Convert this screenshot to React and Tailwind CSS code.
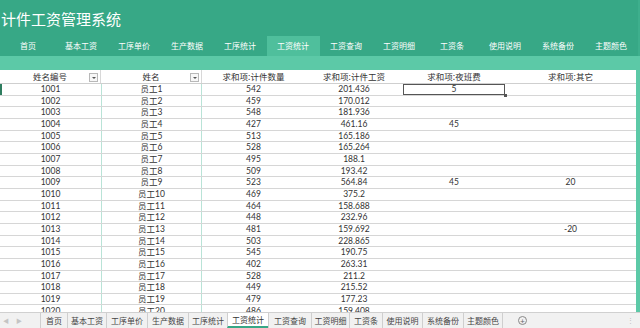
import React from "react";

const navTabs = ["首页", "基本工资", "工序单价", "生产数据", "工序统计", "工资统计", "工资查询", "工资明细", "工资条", "使用说明", "系统备份", "主题颜色"];

const sheetTabs = [
  ["首页", "w-[27px]"],
  ["基本工资", "w-[39px]"],
  ["工序单价", "w-[41px]"],
  ["生产数据", "w-[41px]"],
  ["工序统计", "w-[39px]"],
  ["工资统计", "w-[41px]"],
  ["工资查询", "w-[43px]"],
  ["工资明细", "w-[38px]"],
  ["工资条", "w-[33px]"],
  ["使用说明", "w-[40px]"],
  ["系统备份", "w-[41px]"],
  ["主题颜色", "w-[39px]"],
];

const rows = [
  ["1001", "员工1", "542", "201.436", "5", ""],
  ["1002", "员工2", "459", "170.012", "", ""],
  ["1003", "员工3", "548", "181.936", "", ""],
  ["1004", "员工4", "427", "461.16", "45", ""],
  ["1005", "员工5", "513", "165.186", "", ""],
  ["1006", "员工6", "528", "165.264", "", ""],
  ["1007", "员工7", "495", "188.1", "", ""],
  ["1008", "员工8", "509", "193.42", "", ""],
  ["1009", "员工9", "523", "564.84", "45", "20"],
  ["1010", "员工10", "469", "375.2", "", ""],
  ["1011", "员工11", "464", "158.688", "", ""],
  ["1012", "员工12", "448", "232.96", "", ""],
  ["1013", "员工13", "481", "159.692", "", "-20"],
  ["1014", "员工14", "503", "228.865", "", ""],
  ["1015", "员工15", "545", "190.75", "", ""],
  ["1016", "员工16", "402", "263.31", "", ""],
  ["1017", "员工17", "528", "211.2", "", ""],
  ["1018", "员工18", "449", "215.52", "", ""],
  ["1019", "员工19", "479", "177.23", "", ""],
  ["1020", "员工20", "486", "159.408", "", ""],
];

const cols = "grid grid-cols-[101px_101px_103px_98px_102px_1fr]";
const cjk = { fontFamily: '"Noto Sans CJK SC",sans-serif' };

function FilterBtn() {
  return (
    <span className="absolute right-[2px] top-[3px] w-[9px] h-[9px] border border-[#b8b8b8] bg-[#f7f7f7] flex items-center justify-center">
      <span className="block w-0 h-0 border-l-[2px] border-r-[2px] border-t-[2px] border-l-transparent border-r-transparent border-t-[#555]" />
    </span>
  );
}

export default function App() {
  return (
    <div className="w-[640px] h-[328px] overflow-hidden flex flex-col bg-white" style={{ fontFamily: '"Lato","Noto Sans CJK SC",sans-serif' }}>
      {/* top banner */}
      <div className="flex bg-[#37a886]">
        <div className="flex-1 flex flex-col">
          <div className="h-[36px] flex items-center pl-[1px] text-white text-[15px] leading-none" style={cjk}>
            计件工资管理系统
          </div>
          <div className="h-[20px] flex pl-[1.5px]">
            {navTabs.map((t) => (
              <div
                key={t}
                className={`w-[53px] flex items-center justify-center text-[8px] text-white ${t === "工资统计" ? "bg-[#4fbf9c]" : ""}`}
                style={cjk}
              >
                {t}
              </div>
            ))}
          </div>
        </div>
        <div className="w-[4px] bg-[#3eaf8d]" />
      </div>

      <div className="flex-1 flex min-h-0">
        <div className="flex-1 flex flex-col min-h-0">
          <div className="h-[14px] bg-[#5cc9a7] shrink-0" />
          <div className="flex-1 overflow-hidden text-[#333] text-[8.5px] leading-none">
            {/* header */}
            <div className={`${cols} h-[14px] border-b border-[#cfcfcf]`} style={cjk}>
              <div className="relative flex items-center justify-center border-r border-[#d8d8d8]">
                姓名编号
                <FilterBtn />
              </div>
              <div className="relative flex items-center justify-center border-r border-[#d8d8d8]">
                姓名
                <FilterBtn />
              </div>
              <div className="flex items-center justify-center">求和项:计件数量</div>
              <div className="flex items-center justify-center">求和项:计件工资</div>
              <div className="flex items-center justify-center">求和项:夜班费</div>
              <div className="flex items-center justify-center">求和项:其它</div>
            </div>
            {rows.map((r, i) => (
              <div key={r[0]} className={`${cols} h-[11.67px] border-b border-[#d6d6d6] relative`}>
                {i === 0 && <span className="absolute left-0 top-0 bottom-0 w-[2px] bg-[#2e7d5f]" />}
                <div className="flex items-center justify-center">{r[0]}</div>
                <div className="flex items-center justify-center border-x border-[#b9e3d7]">{r[1]}</div>
                <div className="flex items-center justify-center">{r[2]}</div>
                <div className="flex items-center justify-center">{r[3]}</div>
                <div className={`flex items-center justify-center relative ${i === 0 ? "outline-[1.5px] outline outline-[#555] -outline-offset-1" : ""}`}>
                  {r[4]}
                  {i === 0 && <span className="absolute right-[-2px] bottom-[-2px] w-[3px] h-[3px] bg-[#555]" />}
                </div>
                <div className="flex items-center justify-center">{r[5]}</div>
              </div>
            ))}
          </div>
        </div>
        <div className="w-[4px] bg-[#5cc9a7]" />
      </div>

      {/* sheet tabs */}
      <div className="h-[16px] shrink-0 flex items-stretch bg-[#f1f1f1] border-t border-[#d0d0d0] text-[8px] text-[#444]" style={cjk}>
        <div className="w-[40px] flex items-center gap-[7px] pl-[3px] text-[#c4c4c4] text-[6px]">
          <span>◀</span>
          <span>▶</span>
        </div>
        {sheetTabs.map(([t, w]) => (
          <div
            key={t}
            className={`${w} flex items-center justify-center border-l border-[#cfcfcf] ${t === "工资统计" ? "bg-white border-b-2 border-b-[#37a886] text-[#333]" : ""}`}
          >
            {t}
          </div>
        ))}
        <div className="w-[40px] border-l border-[#cfcfcf] flex items-center justify-center">
          <span className="w-[9px] h-[9px] rounded-full border border-[#888] flex items-center justify-center text-[8px] leading-none text-[#666]">+</span>
        </div>
        <div className="flex-1 flex items-center justify-end pr-[6px] text-[#bbb] text-[7px]">⋮</div>
      </div>
    </div>
  );
}
